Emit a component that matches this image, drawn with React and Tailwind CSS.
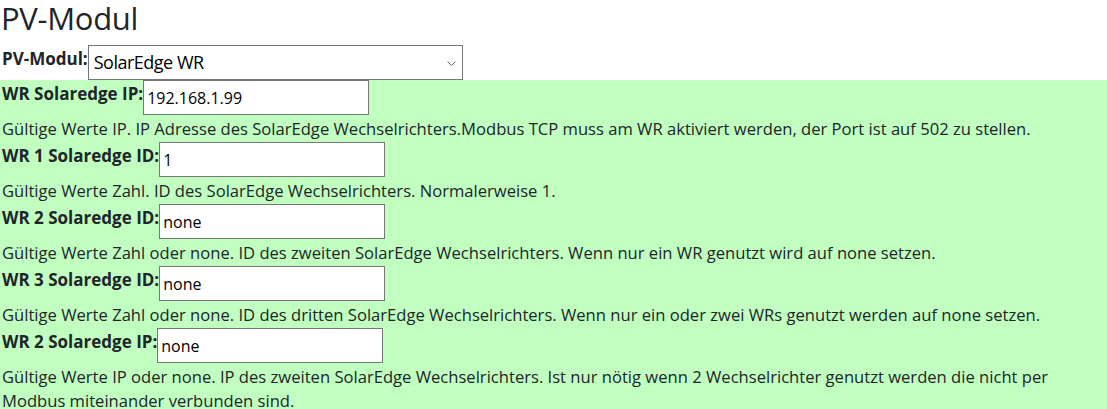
import React from 'react';

const rows = [
  {
    label: 'WR Solaredge IP:',
    value: '192.168.1.99',
    desc: 'Gültige Werte IP. IP Adresse des SolarEdge Wechselrichters.Modbus TCP muss am WR aktiviert werden, der Port ist auf 502 zu stellen.',
  },
  {
    label: 'WR 1 Solaredge ID:',
    value: '1',
    desc: 'Gültige Werte Zahl. ID des SolarEdge Wechselrichters. Normalerweise 1.',
  },
  {
    label: 'WR 2 Solaredge ID:',
    value: 'none',
    desc: 'Gültige Werte Zahl oder none. ID des zweiten SolarEdge Wechselrichters. Wenn nur ein WR genutzt wird auf none setzen.',
  },
  {
    label: 'WR 3 Solaredge ID:',
    value: 'none',
    desc: 'Gültige Werte Zahl oder none. ID des dritten SolarEdge Wechselrichters. Wenn nur ein oder zwei WRs genutzt werden auf none setzen.',
  },
  {
    label: 'WR 2 Solaredge IP:',
    value: 'none',
    desc: 'Gültige Werte IP oder none. IP des zweiten SolarEdge Wechselrichters. Ist nur nötig wenn 2 Wechselrichter genutzt werden die nicht per Modbus miteinander verbunden sind.',
  },
];

const SettingRow = ({ label, value, desc }) => (
  <div>
    <div className="flex items-start mb-[2px]">
      <label className="font-bold text-[17px] leading-6 pt-[2px]">{label}</label>
      <input
        type="text"
        defaultValue={value}
        className="w-[226px] h-[35px] bg-white border border-[#767676] px-[3px] text-[16px] text-black outline-none"
      />
    </div>
    <p className="text-[16.6px] leading-6 mb-[1px] max-w-[1095px]">{desc}</p>
  </div>
);

export default function App() {
  return (
    <div
      className="min-h-[409px] bg-white text-[#212529] text-[16px]"
      style={{ fontFamily: '"Open Sans", "Noto Sans", sans-serif' }}
    >
      <h1 className="text-[31px] leading-[37px] tracking-[-0.3px] font-normal pl-[1px]">PV-Modul</h1>
      <div className="flex items-start mt-[8px] pl-[2px]">
        <label className="font-bold text-[17px] leading-6 pt-[2px]">PV-Modul:</label>
        <div className="relative w-[375px] h-[35px] bg-white border border-[#767676] pl-[5px] text-black text-[18px] leading-[33px] tracking-[-0.5px]">
          <span>SolarEdge WR</span>
          <svg className="absolute right-[6px] top-[15px]" width="9" height="5" viewBox="0 0 9 5" fill="none">
            <path d="M0.5 0.5l4 4 4-4" stroke="#6b6b6b" strokeWidth="1" />
          </svg>
        </div>
      </div>
      <div className="bg-[#c0ffc0] pl-[2px] min-h-[329px]">
        {rows.map((r, i) => (
          <SettingRow key={i} {...r} />
        ))}
      </div>
    </div>
  );
}
